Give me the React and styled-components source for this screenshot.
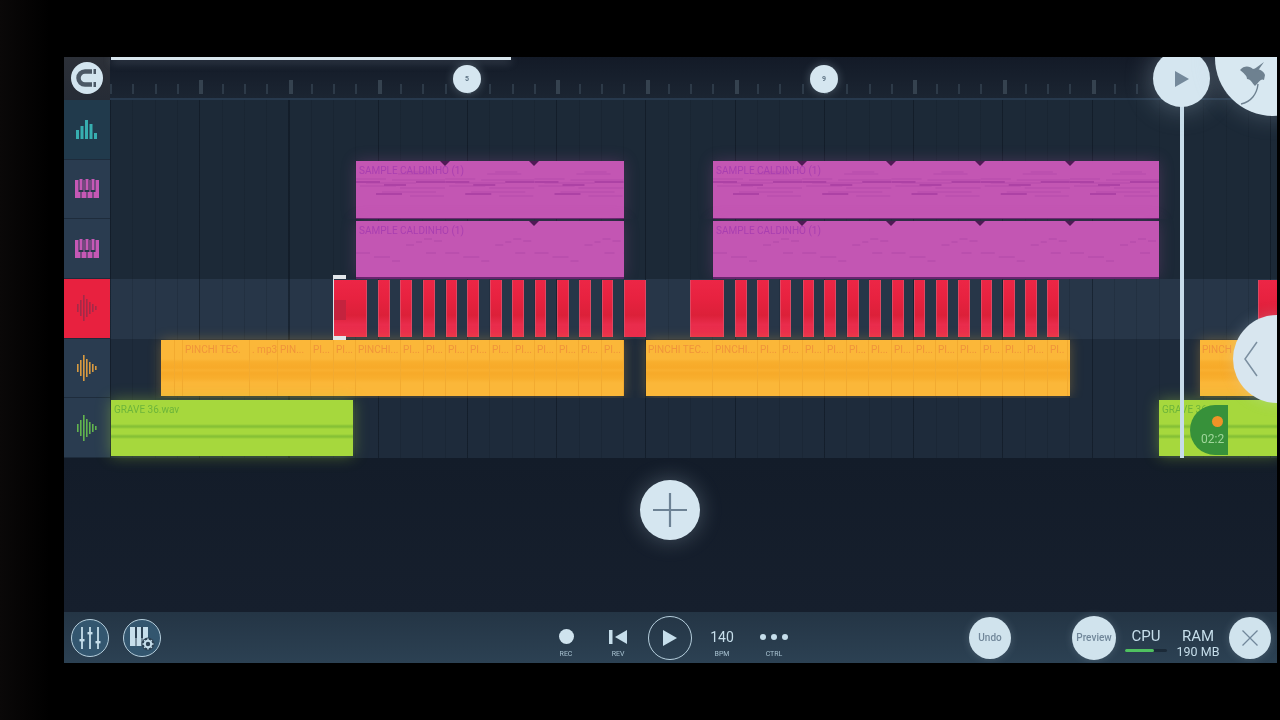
import React from 'react'
import styled, { createGlobalStyle } from 'styled-components'

const BEAT = 22.3125
const BAR = BEAT * 4

const GlobalStyle = createGlobalStyle`
  html, body {
    margin: 0;
    height: 100%;
    background: #000;
    font-family: Roboto, "Liberation Sans", sans-serif;
    overflow: hidden;
  }
`

const Screen = styled.div`
  width: 1280px;
  height: 720px;
  padding: 57px 3px 57px 64px;
  box-sizing: border-box;
  background: linear-gradient(90deg, #0a0808 0, #000 50px);
`

const Frame = styled.div`
  position: relative;
  width: 1213px;
  height: 606px;
  display: flex;
  flex-direction: column;
  overflow: hidden;
  background: #141e2c;
  filter: blur(0.6px);
`

const Arrangement = styled.div`
  display: flex;
  height: 401px;
`

const Sidebar = styled.div`
  width: 46px;
  flex-shrink: 0;
  display: flex;
  flex-direction: column;
`

const SnapCell = styled.div`
  height: 43px;
  display: flex;
  align-items: center;
  justify-content: center;
  padding-bottom: 2px;
  box-sizing: border-box;
  background: linear-gradient(180deg, #2c3038, #262c36);
`

const SnapButton = styled.div`
  width: 32px;
  height: 32px;
  border-radius: 50%;
  background: #d3e5ef;
  display: flex;
  align-items: center;
  justify-content: center;
`

const TrackButton = styled.div`
  height: 59.67px;
  box-sizing: border-box;
  display: flex;
  align-items: center;
  justify-content: center;
  border-bottom: 1px solid #1e2c3c;
  background: ${(p) => p.$bg || '#2a3c50'};
`

const Timeline = styled.div`
  flex: 1;
  display: flex;
  flex-direction: column;
  min-width: 0;
`

const Ruler = styled.div`
  position: relative;
  height: 43px;
  box-sizing: border-box;
  display: flex;
  align-items: flex-end;
  padding-bottom: 4px;
  border-bottom: 2px solid #27394d;
  background: linear-gradient(180deg, #131a27, #1b2532);
`

const Progress = styled.div`
  position: absolute;
  top: 0;
  left: 1px;
  width: 400px;
  height: 3px;
  background: #d8e6ee;
  box-shadow: 0 2px 8px rgba(200, 220, 235, 0.35);
`

const TickCell = styled.div`
  width: ${BEAT}px;
  flex-shrink: 0;
  display: flex;
  align-items: flex-end;
`

const Tick = styled.div`
  width: ${(p) => (p.$major ? 4 : 2)}px;
  height: ${(p) => (p.$major ? 14 : 10)}px;
  background: ${(p) => (p.$major ? '#35424f' : '#2d3a48')};
`

const BarMarker = styled.div`
  position: absolute;
  top: 8px;
  left: ${(p) => p.$x}px;
  width: 28px;
  height: 28px;
  border-radius: 50%;
  background: #d5e6f0;
  color: #5d7283;
  font-size: 7px;
  font-weight: 700;
  display: flex;
  align-items: center;
  justify-content: center;
  box-shadow: 0 0 10px rgba(200, 225, 240, 0.3);
`

const Lane = styled.div`
  position: relative;
  height: 59.67px;
  box-sizing: border-box;
  background-color: ${(p) => p.$bg || '#1c2937'};
  background-image:
    repeating-linear-gradient(90deg, rgba(10, 18, 28, 0.4) 0, rgba(10, 18, 28, 0.4) 1px, transparent 1px, transparent ${BAR}px),
    repeating-linear-gradient(90deg, rgba(10, 18, 28, 0.16) 0, rgba(10, 18, 28, 0.16) 1px, transparent 1px, transparent ${BEAT}px);
`

const Clip = styled.div`
  position: absolute;
  top: ${(p) => p.$top || 1}px;
  height: ${(p) => p.$height || 57}px;
  overflow: hidden;
  box-sizing: border-box;
`

const PinkClip = styled(Clip)`
  background: #c356b3;
  box-shadow: 0 0 14px rgba(195, 86, 179, 0.25), 0 2px 0 #5e1f66;
`

const YellowClip = styled(Clip)`
  display: flex;
  background:
    linear-gradient(180deg, transparent 0, transparent 19px, #f8ae2d 22px, #f7aa29 28px, #f9b030 30px, #f7aa29 33px, #f8ae2d 38px, transparent 43px),
    #fbb739;
  box-shadow: 0 0 12px rgba(251, 182, 54, 0.3);
`

const GreenClip = styled(Clip)`
  background:
    linear-gradient(180deg, transparent 24px, #86c136 26px, #86c136 27px, transparent 29px, transparent 34px, #86c136 36px, #86c136 37px, transparent 39px),
    #a6d83d;
  box-shadow: 0 0 14px rgba(166, 216, 61, 0.4);
`

const RedClip = styled(Clip)`
  background: linear-gradient(180deg, #ec2646 0, #e82240 30%, #dc2039 62%, #e92c4c 78%, #ea2d4c 100%);
  border-left: 1px solid #dd4862;
  border-right: 1px solid #dd4862;
`

const FirstRedPatch = styled.div`
  width: 12px;
  height: 20px;
  margin-top: 20px;
  background: #c4233e;
`

const Handle = styled.div`
  position: absolute;
  left: ${(p) => p.$x}px;
  top: ${(p) => p.$top}px;
  width: 13px;
  height: 4px;
  background: #e2e6ea;
  z-index: 2;
`

const HandleEdge = styled.div`
  position: absolute;
  left: ${(p) => p.$x}px;
  top: -3px;
  width: 1px;
  height: 62px;
  background: #dde3e8;
  z-index: 2;
`

const ClipLabel = styled.div`
  position: absolute;
  top: 4px;
  left: 3px;
  font-size: 10px;
  line-height: 12px;
  white-space: nowrap;
  color: ${(p) => p.$color};
`

const Notch = styled.div`
  position: absolute;
  top: ${(p) => p.$top}px;
  left: ${(p) => p.$x}px;
  width: 0;
  height: 0;
  border-left: 5px solid transparent;
  border-right: 5px solid transparent;
  border-top: 5px solid #4e1a55;
  z-index: 2;
`

const Slice = styled.div`
  flex: 0 0 ${(p) => p.$w}px;
  box-sizing: border-box;
  border-right: 1px solid #f2aa30;
  padding: 4px 0 0 2px;
  font-size: 10px;
  line-height: 12px;
  color: #f0943a;
  white-space: nowrap;
  overflow: hidden;
`

const WaveSvg = styled.svg`
  position: absolute;
  left: 0;
  top: 0;
`

const Stage = styled.div`
  flex: 1;
  background: linear-gradient(180deg, #131c29, #161f2d);
`

const Bottom = styled.div`
  height: 51px;
  flex-shrink: 0;
  display: flex;
  align-items: center;
  background: linear-gradient(180deg, #243545, #2c4153);
`

const LeftGroup = styled.div`
  width: 476px;
  box-sizing: border-box;
  padding-left: 7px;
  display: flex;
  gap: 14px;
`

const Transport = styled.div`
  width: 260px;
  display: flex;
  align-items: center;
`

const TransportCell = styled.div`
  width: 52px;
  height: 51px;
  display: flex;
  flex-direction: column;
  align-items: center;
  justify-content: center;
  padding-top: ${(p) => (p.$plain ? 0 : 8)}px;
  box-sizing: border-box;
`

const CellIcon = styled.div`
  height: 24px;
  display: flex;
  align-items: center;
  justify-content: center;
  color: #c6deeb;
  font-size: 14px;
`

const CellLabel = styled.div`
  font-size: 7px;
  line-height: 10px;
  color: #a9c3d2;
`

const RecDot = styled.div`
  width: 15px;
  height: 15px;
  border-radius: 50%;
  background: #cfe3ee;
`

const CtrlDots = styled.div`
  display: flex;
  gap: 5px;
`

const CtrlDot = styled.div`
  width: 6px;
  height: 6px;
  border-radius: 50%;
  background: #c6deeb;
`

const OutlineCircle = styled.div`
  width: ${(p) => p.$size}px;
  height: ${(p) => p.$size}px;
  border-radius: 50%;
  box-sizing: border-box;
  border: 1.5px solid #b6cfdd;
  background: ${(p) => p.$bg || 'transparent'};
  display: flex;
  align-items: center;
  justify-content: center;
`

const RightGroup = styled.div`
  flex: 1;
  display: flex;
  align-items: center;
`

const SolidButton = styled.div`
  width: ${(p) => p.$size}px;
  height: ${(p) => p.$size}px;
  margin-left: ${(p) => p.$gap}px;
  flex-shrink: 0;
  border-radius: 50%;
  background: #d0e3ed;
  color: #71879a;
  font-size: ${(p) => p.$font || 10}px;
  font-weight: 500;
  display: flex;
  align-items: center;
  justify-content: center;
  box-shadow: 0 0 8px rgba(200, 225, 240, 0.2);
`

const Meter = styled.div`
  width: 52px;
  height: 51px;
  display: flex;
  flex-direction: column;
  align-items: center;
  justify-content: center;
  flex-shrink: 0;
  margin-left: ${(p) => p.$gap || 0}px;
  padding-top: 11px;
  box-sizing: border-box;
`

const MeterTitle = styled.div`
  font-size: 15px;
  line-height: 17px;
  color: #c6deeb;
`

const MeterValue = styled.div`
  font-size: 12.5px;
  line-height: 13px;
  color: #c6deeb;
  white-space: nowrap;
`

const CpuTrack = styled.div`
  width: 42px;
  height: 3px;
  margin: 4px 0 6px;
  background: #1b2a38;
  border-radius: 2px;
`

const CpuFill = styled.div`
  height: 100%;
  border-radius: 2px;
  background: #4fc160;
`

const Playhead = styled.div`
  position: absolute;
  left: 1115.5px;
  top: 0;
  width: 4px;
  height: 401px;
  background: #c7dcea;
  z-index: 4;
`

const PlayheadKnob = styled.div`
  position: absolute;
  left: 1089px;
  top: -7px;
  width: 57px;
  height: 57px;
  border-radius: 50%;
  background: #d5e6f0;
  display: flex;
  align-items: center;
  justify-content: center;
  box-shadow: 0 0 28px rgba(200, 225, 240, 0.35);
  z-index: 5;
`

const LogoButton = styled.div`
  position: absolute;
  right: -54px;
  top: -57px;
  width: 116px;
  height: 116px;
  border-radius: 50%;
  background: #d8e8f1;
  box-shadow: 0 0 24px rgba(200, 225, 240, 0.25);
  z-index: 5;
`

const LogoMark = styled.svg`
  position: absolute;
  left: 23px;
  top: 62px;
`

const DrawerTab = styled.div`
  position: absolute;
  left: 1169px;
  top: 258px;
  width: 88px;
  height: 88px;
  border-radius: 50%;
  background: #d8e6ef;
  z-index: 5;
  box-shadow: 0 0 14px rgba(200, 225, 240, 0.25);
`

const DrawerChevron = styled.svg`
  position: absolute;
  left: 10px;
  top: 25px;
`

const RecBadge = styled.div`
  position: absolute;
  left: 1126px;
  top: 348px;
  width: 38px;
  height: 50px;
  border-radius: 25px 0 0 25px;
  background: #37913a;
  overflow: hidden;
  z-index: 3;
`

const RecBadgeDot = styled.div`
  position: absolute;
  left: 22px;
  top: 11px;
  width: 11px;
  height: 11px;
  border-radius: 50%;
  background: #f09327;
`

const RecBadgeTime = styled.div`
  position: absolute;
  left: 11px;
  top: 27px;
  font-size: 12px;
  line-height: 14px;
  color: #9fd69a;
  white-space: nowrap;
`

const AddButton = styled.div`
  position: absolute;
  left: 576px;
  top: 423px;
  width: 60px;
  height: 60px;
  border-radius: 50%;
  background: #d5e6f0;
  display: flex;
  align-items: center;
  justify-content: center;
  box-shadow: 0 0 22px rgba(200, 225, 240, 0.28);
  z-index: 3;
`

// page x minus the left edge of the lanes
const at = (x) => x - 110

const redBars = [
  [378, 390], [400, 412], [423, 435], [446, 457], [467, 479], [490, 502], [512, 524],
  [535, 546], [557, 569], [579, 591], [602, 613], [624, 646], [690, 724], [735, 747],
  [757, 769], [780, 791], [803, 814], [824, 836], [847, 859], [869, 881], [892, 904],
  [914, 925], [936, 948], [958, 970], [981, 992], [1003, 1015], [1025, 1037], [1047, 1059],
  [1258, 1280],
]

const firstSlices = [
  [14, ''], [8, ''], [67, 'PINCHI TEC.'], [28, '. mp3'], [33, 'PIN...'], [23, 'PI...'], [22, 'PI...'],
  [45, 'PINCHI...'], [23, 'PI...'], [22, 'PI...'], [22, 'PI...'], [22, 'PI...'], [23, 'PI...'], [22, 'PI...'],
  [22, 'PI...'], [22, 'PI...'], [23, 'PI...'], [22, 'PI...'],
]

const secondSlices = [
  [67, 'PINCHI TEC...'], [45, 'PINCHI...'], [22, 'PI...'], [23, 'PI...'], [22, 'PI...'], [22, 'PI...'],
  [22, 'PI...'], [23, 'PI...'], [22, 'PI...'], [22, 'PI...'], [22, 'PI...'], [23, 'PI...'], [22, 'PI...'],
  [22, 'PI...'], [23, 'PI...'], [20, 'PI..'],
]

const denseWave = [
  'M0 18 H30 M10 22 H60 M36 19 H89 M4 25 H40 M44 27 H89 M26 31 H80 M54 35 H88 M42 13 H76 M50 11 H72',
  'M0 21 H24 M28 24 H50 M60 21 H89 M20 33 H46',
]

const thinWave = 'M0 32 H14 M18 36 H34 M36 40 H44 M50 24 H58 M60 21 H66 M68 18 H76 M78 20 H86 M70 32 H80'

function Waves({ width, dense }) {
  const count = Math.ceil(width / BAR)
  const repeats = Array.from({ length: count }, (_, i) => i)
  return (
    <WaveSvg width={width} height="57" viewBox={`0 0 ${width} 57`}>
      {repeats.map((i) => (
        <g key={i} transform={`translate(${i * BAR} 0)`} fill="none" strokeWidth="1">
          {dense ? (
            <>
              <path d={denseWave[0]} stroke="#b54aab" />
              <path d={denseWave[1]} stroke="#ad42a5" strokeWidth="2" />
            </>
          ) : (
            <path d={thinWave} stroke="#b148a8" />
          )}
        </g>
      ))}
    </WaveSvg>
  )
}

function Sample({ x, end, dense, top, height, notches }) {
  const width = end - x
  return (
    <>
      <PinkClip style={{ left: at(x), width }} $top={top} $height={height}>
        <Waves width={width} dense={dense} />
        <ClipLabel $color="#a93fb0">SAMPLE CALDINHO (1)</ClipLabel>
      </PinkClip>
      {notches.map((n) => (
        <Notch key={n} $x={at(n) - 5} $top={top} />
      ))}
    </>
  )
}

function WaveIcon({ color }) {
  const heights = [8, 16, 26, 18, 12, 8, 4]
  return (
    <svg width="22" height="28" viewBox="0 0 22 28">
      {heights.map((h, i) => (
        <rect key={i} x={1 + i * 3} y={14 - h / 2} width="1.6" height={h} fill={color} />
      ))}
    </svg>
  )
}

function PianoIcon() {
  return (
    <svg width="26" height="20" viewBox="0 0 26 20">
      <rect x="1" y="1" width="24" height="18" fill="#c558b5" />
      {[6.5, 12.5, 18.5].map((x) => (
        <g key={x}>
          <rect x={x} y="1" width="1" height="18" fill="#27384a" />
          <rect x={x - 2} y="1" width="5" height="12" fill="#27384a" />
          <rect x={x - 1} y="0" width="3" height="11" fill="#c558b5" />
        </g>
      ))}
    </svg>
  )
}

function BarsIcon() {
  const bars = [[1, 9], [5.5, 13], [10, 19], [14.5, 15], [19, 6]]
  return (
    <svg width="24" height="22" viewBox="0 0 24 22">
      {bars.map(([x, h]) => (
        <rect key={x} x={x} y={21 - h} width="3" height={h} fill="#37aeb0" />
      ))}
    </svg>
  )
}

function MagnetIcon() {
  return (
    <svg width="26" height="26" viewBox="0 0 26 26" fill="none">
      <path d="M18 6.5 H11 a6.5 6.5 0 0 0 0 13 H18" stroke="#4c5966" strokeWidth="4.5" />
      <rect x="19.5" y="4" width="2.5" height="5" fill="#4c5966" />
      <rect x="19.5" y="17" width="2.5" height="5" fill="#4c5966" />
    </svg>
  )
}

function MixerIcon() {
  return (
    <svg width="26" height="24" viewBox="0 0 26 24" stroke="#c6deeb" fill="#c6deeb">
      <path d="M5 1 V23 M13 1 V23 M21 1 V23" strokeWidth="1.8" />
      <rect x="2.5" y="13" width="5" height="2.4" stroke="none" />
      <rect x="10.5" y="6" width="5" height="2.4" stroke="none" />
      <rect x="18.5" y="15" width="5" height="2.4" stroke="none" />
    </svg>
  )
}

function PianoGearIcon() {
  return (
    <svg width="28" height="26" viewBox="0 0 28 26">
      <rect x="2" y="2" width="18" height="19" fill="#c6deeb" />
      <rect x="7.5" y="2" width="1" height="19" fill="#2c4153" />
      <rect x="13.5" y="2" width="1" height="19" fill="#2c4153" />
      <rect x="7" y="2" width="2" height="11" fill="#2c4153" />
      <rect x="13" y="2" width="2" height="11" fill="#2c4153" />
      <circle cx="20" cy="19" r="6.5" fill="#2c4153" />
      <circle cx="20" cy="19" r="3.2" fill="none" stroke="#c6deeb" strokeWidth="2" />
      <path d="M20 13.5 V15 M20 23 V24.5 M14.5 19 H16 M24 19 H25.5 M16.2 15.2 L17.2 16.2 M22.8 21.8 L23.8 22.8 M23.8 15.2 L22.8 16.2 M17.2 21.8 L16.2 22.8" stroke="#c6deeb" strokeWidth="1.5" />
    </svg>
  )
}

export default function App() {
  const ticks = Array.from({ length: 52 }, (_, i) => i)
  return (
    <>
      <GlobalStyle />
      <Screen>
        <Frame>
          <Arrangement>
            <Sidebar>
              <SnapCell>
                <SnapButton>
                  <MagnetIcon />
                </SnapButton>
              </SnapCell>
              <TrackButton $bg="#213a4c">
                <BarsIcon />
              </TrackButton>
              <TrackButton>
                <PianoIcon />
              </TrackButton>
              <TrackButton>
                <PianoIcon />
              </TrackButton>
              <TrackButton $bg="#e8213f">
                <WaveIcon color="#a32a48" />
              </TrackButton>
              <TrackButton>
                <WaveIcon color="#d89a40" />
              </TrackButton>
              <TrackButton>
                <WaveIcon color="#62b44e" />
              </TrackButton>
            </Sidebar>

            <Timeline>
              <Ruler>
                <Progress />
                {ticks.map((i) => (
                  <TickCell key={i}>
                    <Tick $major={i % 4 === 0 && i > 0} />
                  </TickCell>
                ))}
                <BarMarker $x={343}>5</BarMarker>
                <BarMarker $x={700}>9</BarMarker>
              </Ruler>

              <Lane />

              <Lane>
                <Sample x={356} end={624} dense top={1} height={57} notches={[445, 534]} />
                <Sample x={713} end={1159} dense top={1} height={57} notches={[802, 891, 980, 1070]} />
              </Lane>

              <Lane>
                <Sample x={356} end={624} top={2} height={56} notches={[534]} />
                <Sample x={713} end={1159} top={2} height={56} notches={[802, 891, 980, 1070]} />
              </Lane>

              <Lane $bg="#273648">
                <RedClip style={{ left: at(333), width: 34 }}>
                  <FirstRedPatch />
                </RedClip>
                <Handle $x={at(333)} $top={-4} />
                <Handle $x={at(333)} $top={57} />
                <HandleEdge $x={at(333)} />
                {redBars.map(([start, end]) => (
                  <RedClip key={start} style={{ left: at(start), width: end - start }} />
                ))}
              </Lane>

              <Lane $bg="#1e2b3b">
                <YellowClip style={{ left: at(161), width: 463 }} $height={56}>
                  {firstSlices.map(([w, text], i) => (
                    <Slice key={i} $w={w}>{text}</Slice>
                  ))}
                </YellowClip>
                <YellowClip style={{ left: at(646), width: 424 }} $height={56}>
                  {secondSlices.map(([w, text], i) => (
                    <Slice key={i} $w={w}>{text}</Slice>
                  ))}
                </YellowClip>
                <YellowClip style={{ left: at(1200), width: 80 }} $height={56}>
                  <Slice $w={80}>PINCH</Slice>
                </YellowClip>
              </Lane>

              <Lane $bg="#1e2b3b">
                <GreenClip style={{ left: at(111), width: 242 }} $top={2} $height={56}>
                  <ClipLabel $color="#6db53a">GRAVE 36.wav</ClipLabel>
                </GreenClip>
                <GreenClip style={{ left: at(1159), width: 121 }} $top={2} $height={56}>
                  <ClipLabel $color="#6db53a">GRAVE 36.wav</ClipLabel>
                </GreenClip>
              </Lane>
            </Timeline>
          </Arrangement>

          <Stage />

          <Bottom>
            <LeftGroup>
              <OutlineCircle $size={38} $bg="#33566f">
                <MixerIcon />
              </OutlineCircle>
              <OutlineCircle $size={38} $bg="#33566f">
                <PianoGearIcon />
              </OutlineCircle>
            </LeftGroup>

            <Transport>
              <TransportCell>
                <CellIcon>
                  <RecDot />
                </CellIcon>
                <CellLabel>REC</CellLabel>
              </TransportCell>
              <TransportCell>
                <CellIcon>
                  <svg width="18" height="16" viewBox="0 0 18 16" fill="#c6deeb">
                    <rect x="0" y="1" width="3.5" height="14" />
                    <path d="M18 1 V15 L6 8 Z" />
                  </svg>
                </CellIcon>
                <CellLabel>REV</CellLabel>
              </TransportCell>
              <TransportCell $plain>
                <OutlineCircle $size={44}>
                  <svg width="16" height="18" viewBox="0 0 16 18" fill="#c6deeb">
                    <path d="M1 1 L15 9 L1 17 Z" />
                  </svg>
                </OutlineCircle>
              </TransportCell>
              <TransportCell>
                <CellIcon>140</CellIcon>
                <CellLabel>BPM</CellLabel>
              </TransportCell>
              <TransportCell>
                <CellIcon>
                  <CtrlDots>
                    <CtrlDot />
                    <CtrlDot />
                    <CtrlDot />
                  </CtrlDots>
                </CellIcon>
                <CellLabel>CTRL</CellLabel>
              </TransportCell>
            </Transport>

            <RightGroup>
              <SolidButton $size={42} $gap={169}>Undo</SolidButton>
              <SolidButton $size={44} $gap={61}>Preview</SolidButton>
              <Meter $gap={4}>
                <MeterTitle>CPU</MeterTitle>
                <CpuTrack>
                  <CpuFill style={{ width: '70%' }} />
                </CpuTrack>
              </Meter>
              <Meter>
                <MeterTitle>RAM</MeterTitle>
                <MeterValue>190 MB</MeterValue>
              </Meter>
              <SolidButton $size={42} $gap={5}>
                <svg width="18" height="18" viewBox="0 0 18 18" stroke="#71879a" strokeWidth="1.3">
                  <path d="M1.5 1.5 L16.5 16.5 M16.5 1.5 L1.5 16.5" />
                </svg>
              </SolidButton>
            </RightGroup>
          </Bottom>

          <Playhead />
          <PlayheadKnob>
            <svg width="16" height="18" viewBox="0 0 16 18" fill="#74899b">
              <path d="M1 1 L15 9 L1 17 Z" />
            </svg>
          </PlayheadKnob>

          <LogoButton>
            <LogoMark width="30" height="44" viewBox="0 0 30 44" fill="#6e8190">
              <path d="M2 8 C6 3 12 4 15 7 C20 6 26 9 27 13 L26 18 C23 16 21 20 17 24 C14 21 13 17 9 17 C9 13 5 11 2 8 Z" />
              <path d="M15 8 L26 0 L19 10 Z" />
              <path d="M20 22 C19 32 13 40 3 42" fill="none" stroke="#6e8190" strokeWidth="1.4" />
            </LogoMark>
          </LogoButton>

          <RecBadge>
            <RecBadgeDot />
            <RecBadgeTime>02:2</RecBadgeTime>
          </RecBadge>

          <DrawerTab>
            <DrawerChevron width="16" height="38" viewBox="0 0 16 38" fill="none" stroke="#7b8fa0" strokeWidth="1.5">
              <path d="M14 2 L2 19 L14 36" />
            </DrawerChevron>
          </DrawerTab>

          <AddButton>
            <svg width="36" height="36" viewBox="0 0 36 36" stroke="#6d8294" strokeWidth="2.2">
              <path d="M18 1 V35 M1 18 H35" />
            </svg>
          </AddButton>
        </Frame>
      </Screen>
    </>
  )
}
